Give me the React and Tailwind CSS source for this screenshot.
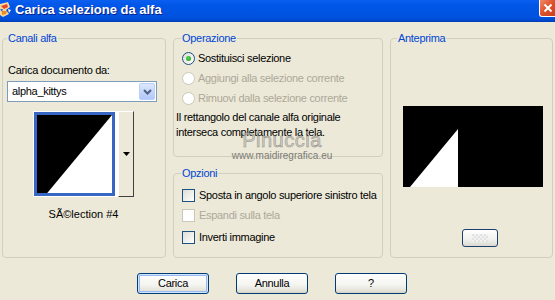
import React from "react";

const font = { fontFamily: '"Liberation Sans", Arial, sans-serif' };

function Radio({ checked, disabled }) {
  return (
    <div
      className={
        "w-[13px] h-[13px] rounded-full border flex items-center justify-center shrink-0 " +
        (disabled
          ? "border-[#cac8bb] bg-white"
          : "border-[#1c5180] bg-[linear-gradient(135deg,#dcdcd7,#ffffff)]")
      }
    >
      {checked && (
        <div className="w-[5px] h-[5px] rounded-full bg-[radial-gradient(circle_at_40%_40%,#55d555,#1a9a1a)]" />
      )}
    </div>
  );
}

function Check({ disabled }) {
  return (
    <div
      className={
        "w-[13px] h-[13px] border shrink-0 " +
        (disabled
          ? "border-[#cac8bb] bg-white"
          : "border-[#1c5180] bg-[linear-gradient(135deg,#dcdcd7,#ffffff)]")
      }
    />
  );
}

function Button({ children, def }) {
  return (
    <div
      className={
        "w-[72px] h-[21px] rounded-[3px] border border-[#003c74] flex items-center justify-center text-[11px] text-black bg-[linear-gradient(to_bottom,#ffffff,#f3f3ef_60%,#e3e1d7_90%,#d6d0c5)] " +
        (def ? "shadow-[inset_0_0_0_1px_#cee7ff,inset_0_0_0_2px_#98b8f3]" : "")
      }
    >
      {children}
    </div>
  );
}

function Legend({ children, ml }) {
  return (
    <legend className={"px-[1px] text-[11px] leading-[14px] text-[#0046d5] tracking-[-0.3px] " + ml}>
      {children}
    </legend>
  );
}

export default function App() {
  return (
    <div
      className="relative w-[555px] h-[300px] bg-[#ece9d8] flex flex-col overflow-hidden text-[11px] text-black tracking-[-0.3px]"
      style={font}
    >
      {/* Title bar */}
      <div className="h-[22px] shrink-0 flex items-start bg-[linear-gradient(to_bottom,#0a5ff0,#0056e6_25%,#0052df_80%,#0046c8_95%,#003ab0)]">
        <svg width="13" height="18" viewBox="0 0 13 18" className="mt-[1px] shrink-0">
          <path d="M0 3 L8 1 L10 6 L6 9 L9 13 L3 16 L0 14 Z" fill="#f6d89a" />
          <path d="M1 5 L7 3 L8 6 L4 8 Z" fill="#e8442a" />
          <path d="M2 10 L7 10 L6 13 L2 14 Z" fill="#f08a1c" />
          <path d="M8 8 L11 9 L9 12 Z" fill="#ffffff" />
          <path d="M0 8 L3 8 L2 11 Z" fill="#3a6fd8" />
        </svg>
        <div className="ml-[2px] mt-[2px] text-white font-bold text-[13px] leading-[16px] tracking-[0px] [text-shadow:1px_1px_0_#0a1e8a]">
          Carica selezione da alfa
        </div>
        <div className="ml-auto mt-0 w-[16px] h-[17px] rounded-bl-[3px] border-l border-b border-white bg-[linear-gradient(135deg,#f08a6a,#e0502a_50%,#c8401e)] flex items-center justify-center">
          <svg width="10" height="10" viewBox="0 0 10 10">
            <path d="M1.5 1.5 L8.5 8.5 M8.5 1.5 L1.5 8.5" stroke="white" strokeWidth="2" />
          </svg>
        </div>
      </div>

      {/* Body */}
      <div className="flex px-[2px] pt-[9px]">
        {/* Canali alfa */}
        <fieldset className="w-[164px] h-[227px] border border-[#d0d0bf] rounded-[4px] flex flex-col">
          <Legend ml="ml-[4px]">Canali alfa</Legend>
          <div className="flex flex-col">
            <div className="mt-[18px] ml-[5px] leading-[14px]">Carica documento da:</div>
            <div className="mt-[4px] ml-[4px] w-[150px] h-[21px] border border-[#7f9db9] bg-white flex items-center">
              <span className="ml-[4px]">alpha_kittys</span>
              <div className="ml-auto mr-[1px] w-[16px] h-[17px] rounded-[2px] border border-[#b9d1fa] bg-[linear-gradient(to_bottom,#dde8fd,#c1d3fb_60%,#b2c8f8)] flex items-center justify-center">
                <svg width="9" height="6" viewBox="0 0 9 6">
                  <path d="M1 1 L4.5 4.5 L8 1" stroke="#4d6185" strokeWidth="2" fill="none" />
                </svg>
              </div>
            </div>
            <div className="mt-[9px] ml-[30px] flex">
              <div className="w-[85px] h-[86px] bg-white pl-[1px] pt-[1px] pr-[3px] pb-[1px]">
                <div className="w-full h-full border-[3px] border-[#3767c3]">
                  <svg className="block w-full h-full" viewBox="0 0 73 77" preserveAspectRatio="none">
                    <rect width="73" height="77" fill="#000" />
                    <polygon points="10,77 73,0 73,77" fill="#fff" />
                  </svg>
                </div>
              </div>
              <div className="w-[16px] h-[86px] border-l border-t border-white border-r border-b border-r-[#404040] border-b-[#404040] bg-[#ece9d8] flex items-center justify-center">
                <svg width="7" height="4" viewBox="0 0 7 4">
                  <path d="M0 0 L7 0 L3.5 4 Z" fill="#000" />
                </svg>
              </div>
            </div>
            <div className="mt-[10px] ml-[30px] w-[101px] text-center leading-[14px] tracking-[0px]">SÃ©lection #4</div>
          </div>
        </fieldset>

        {/* Middle column */}
        <div className="ml-[7px] w-[210px] flex flex-col">
          <fieldset className="h-[126px] border border-[#d0d0bf] rounded-[4px]">
            <Legend ml="ml-[7px]">Operazione</Legend>
            <div className="flex flex-col mt-[3px]">
              <div className="h-[20px] flex items-center ml-[8px] gap-[3px]">
                <Radio checked />
                <span>Sostituisci selezione</span>
              </div>
              <div className="h-[20px] flex items-center ml-[8px] gap-[3px] text-[#aca899]">
                <Radio disabled />
                <span>Aggiungi alla selezione corrente</span>
              </div>
              <div className="h-[20px] flex items-center ml-[8px] gap-[3px] text-[#aca899]">
                <Radio disabled />
                <span>Rimuovi dalla selezione corrente</span>
              </div>
              <div className="mt-[2px] ml-[2px] leading-[15px]">
                Il rettangolo del canale alfa originale
                <br />
                interseca completamente la tela.
              </div>
            </div>
          </fieldset>
          <fieldset className="mt-[9px] h-[92px] border border-[#d0d0bf] rounded-[4px]">
            <Legend ml="ml-[7px]">Opzioni</Legend>
            <div className="flex flex-col mt-[5px]">
              <div className="h-[20px] flex items-center ml-[8px] gap-[4px]">
                <Check />
                <span>Sposta in angolo superiore sinistro tela</span>
              </div>
              <div className="h-[21px] flex items-center ml-[8px] gap-[4px] text-[#aca899]">
                <Check disabled />
                <span>Espandi sulla tela</span>
              </div>
              <div className="h-[22px] flex items-center ml-[8px] gap-[4px]">
                <Check />
                <span>Inverti immagine</span>
              </div>
            </div>
          </fieldset>
        </div>

        {/* Anteprima */}
        <fieldset className="ml-[7px] w-[163px] h-[227px] border border-[#d0d0bf] rounded-[4px] flex flex-col">
          <Legend ml="ml-[6px]">Anteprima</Legend>
          <div className="flex flex-col">
            <svg className="block mt-[61px] ml-[12px]" width="140" height="81" viewBox="0 0 140 81">
              <rect width="140" height="81" fill="#000" />
              <polygon points="7,81 55,23 55,81" fill="#fff" />
            </svg>
            <div className="mt-[42px] ml-[71px] w-[36px] h-[18px] rounded-[3px] border border-[#1c3f6e] bg-[linear-gradient(to_bottom,#ffffff,#f0f0ec_60%,#dcdad0)] flex items-center justify-center">
              <div className="w-[16px] h-[8px] bg-[repeating-conic-gradient(#f2f2f2_0_25%,#e2e2e2_0_50%)] bg-[length:4px_4px]" />
            </div>
          </div>
        </fieldset>
      </div>

      {/* Buttons */}
      <div className="flex pl-[137px] mt-[15px] gap-[27px]">
        <Button def>Carica</Button>
        <Button>Annulla</Button>
        <Button>?</Button>
      </div>

      {/* Watermark overlay */}
      <div className="absolute left-[232px] top-[130px] w-[100px] text-center pointer-events-none">
        <div className="text-[20px] leading-[20px] text-[#c4c2bb]/70 tracking-[0.5px] [-webkit-text-stroke:0.5px_#8d8b86]">
          Pinuccia
        </div>
        <div className="text-[10px] leading-[12px] text-[#7d7b76] tracking-[0px] -ml-[8px] w-[116px]">
          www.maidiregrafica.eu
        </div>
      </div>
    </div>
  );
}
